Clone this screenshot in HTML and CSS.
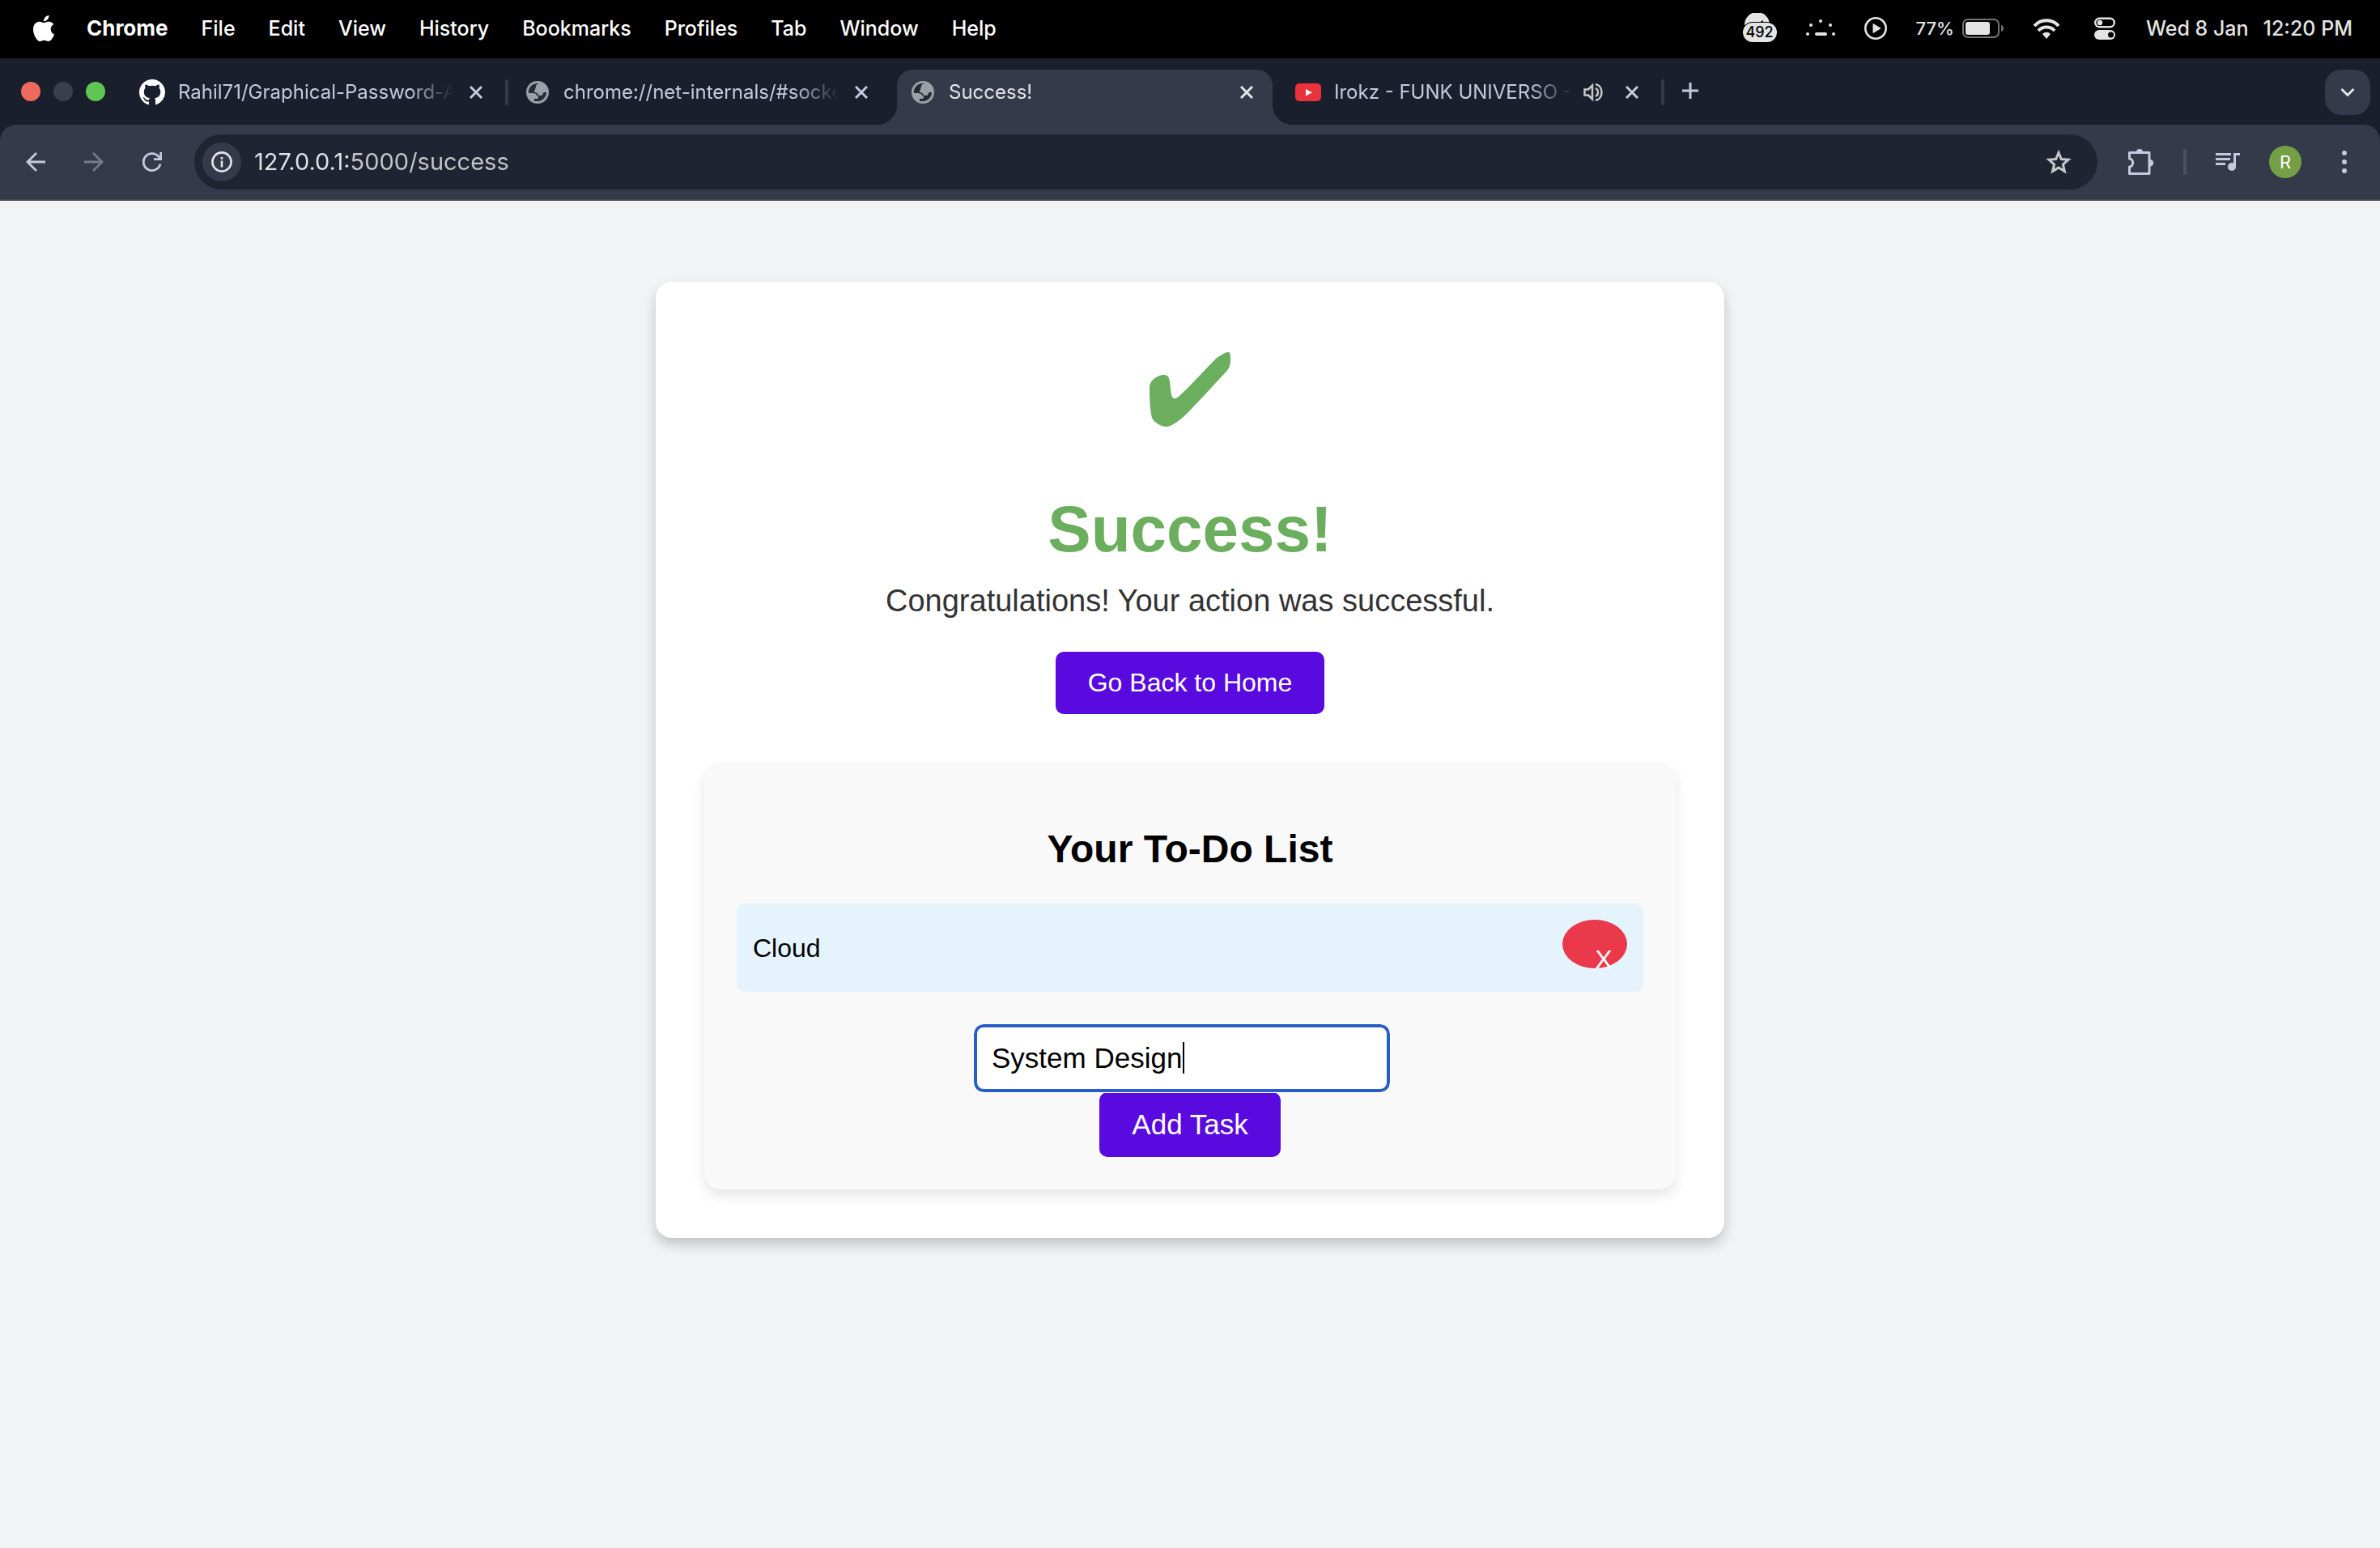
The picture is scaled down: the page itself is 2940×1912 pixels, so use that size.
FILE: index.html
```html
<!DOCTYPE html>
<html lang="en">
<head>
<meta charset="utf-8">
<title>Success!</title>
<link rel="stylesheet" href="styles.css">
</head>
<body>
<svg class="defs" aria-hidden="true">
  <symbol id="globe" viewBox="0 0 28 28">
    <circle cx="14" cy="14" r="14" fill="#9aa0a3"/>
    <path class="land" d="M3 15C2 8 8 2 16 3C13 4 12 5 12 7C12 8 11 9 11 10C11 12 10 11 10 13C10 15 14 14 14 16C14 18 17 18 19 18C21 18 20 15 22 14L25 14C25 20 20 25 14 25L10 25V22H13C15 22 15 21 15 20C15 18 12 18 12 16C11 15 6 15 3 15Z"/>
  </symbol>
  <symbol id="close" viewBox="0 0 16 16">
    <path d="M1 1L15 15M15 1L1 15" fill="none" stroke="currentColor" stroke-width="3"/>
  </symbol>
</svg>

<header class="menubar">
  <nav class="menus" aria-label="Application menu">
    <button class="menu-logo" aria-label="Apple menu"><svg width="32" height="32" viewBox="0 0 24 24" fill="#fff"><path d="M12.152 6.896c-.948 0-2.415-1.078-3.96-1.04-2.04.027-3.91 1.183-4.961 3.014-2.117 3.675-.546 9.103 1.519 12.09 1.013 1.454 2.208 3.09 3.792 3.039 1.52-.065 2.09-.987 3.935-.987 1.831 0 2.35.987 3.96.948 1.637-.026 2.676-1.48 3.676-2.948 1.156-1.688 1.636-3.325 1.662-3.415-.039-.013-3.182-1.221-3.22-4.857-.026-3.04 2.48-4.494 2.597-4.559-1.429-2.09-3.623-2.324-4.39-2.376-2-.156-3.675 1.09-4.61 1.09zM15.53 3.83c.843-1.012 1.4-2.427 1.245-3.83-1.207.052-2.662.805-3.532 1.818-.78.896-1.454 2.338-1.273 3.714 1.338.104 2.715-.688 3.559-1.701"/></svg></button>
    <button class="menu-app">Chrome</button>
    <button>File</button>
    <button>Edit</button>
    <button>View</button>
    <button>History</button>
    <button>Bookmarks</button>
    <button>Profiles</button>
    <button>Tab</button>
    <button>Window</button>
    <button>Help</button>
  </nav>
  <div class="status">
    <span class="cloud">
      <svg width="42" height="38" viewBox="0 0 42 38"><path d="M2 15A15.500 15.500 0 0 1 33 14Z" fill="#e4e4e4"/><path d="M20 12l5-3v3z" fill="#000"/><rect x="-1" y="11" width="44" height="28" rx="13" fill="#000"/><rect y="12" width="42" height="24" rx="12" fill="#e4e4e4"/></svg>
      <span class="cloud-count">492</span>
    </span>
    <svg width="36" height="22" viewBox="0 0 36 22" fill="#e4e4e4"><circle cx="2" cy="18" r="2"/><circle cx="6" cy="7" r="2"/><circle cx="18" cy="2" r="2"/><circle cx="30" cy="7" r="2"/><circle cx="34" cy="18" r="2"/><rect x="11" y="16" width="15" height="4" rx="2"/></svg>
    <svg width="28" height="28" viewBox="0 0 28 28"><circle cx="14" cy="14" r="12.700" fill="none" stroke="#e4e4e4" stroke-width="2.600"/><path d="M11 8.500v11l9-5.500z" fill="#e4e4e4" stroke="#e4e4e4" stroke-linejoin="round"/></svg>
    <span class="battery">
      <span class="percent">77%</span>
      <svg width="51" height="24" viewBox="0 0 51 24"><rect x="1" y="1" width="44" height="22" rx="6" fill="none" stroke="#737373" stroke-width="2"/><rect x="4" y="4" width="30" height="16" rx="3" fill="#e4e4e4"/><path d="M48 8c4 1 4 7 0 8z" fill="#737373"/></svg>
    </span>
    <svg width="40" height="26" viewBox="0 0 40 26"><g fill="none" stroke="#e4e4e4" stroke-width="4"><path d="M2 10C10 1 24 1 32 10"/><path d="M7 16C12 10 22 10 27 16"/></g><path d="M12 20c3-3 7-3 10 0l-5 6z" fill="#e4e4e4"/></svg>
    <svg width="28" height="28" viewBox="0 0 28 28"><rect x="1.200" y="1.700" width="23.600" height="10.600" rx="5.300" fill="none" stroke="#e4e4e4" stroke-width="2.400"/><circle cx="7" cy="7" r="3.200" fill="#e4e4e4"/><rect y="16" width="26" height="12" rx="6" fill="#e4e4e4"/><circle cx="20.500" cy="22" r="3.500" fill="#000"/></svg>
    <time class="clock"><span>Wed 8 Jan</span><span>12:20 PM</span></time>
  </div>
</header>

<div class="browser">
  <div class="tabstrip">
    <div class="lights"><button class="light red" aria-label="Close window"></button><button class="light grey" aria-label="Minimise window"></button><button class="light green" aria-label="Zoom window"></button></div>
    <div class="tab">
      <svg class="favicon" viewBox="0 0 16 16" fill="#fff"><path d="M8 0C3.580 0 0 3.580 0 8c0 3.540 2.290 6.530 5.470 7.590.4.070.55-.17.55-.38 0-.19-.01-.82-.01-1.490-2.010.37-2.530-.49-2.690-.94-.09-.23-.48-.94-.82-1.130-.28-.15-.68-.52-.01-.53.63-.01 1.080.58 1.230.82.72 1.210 1.870.87 2.330.66.070-.52.28-.87.51-1.070-1.780-.2-3.640-.89-3.640-3.950 0-.87.31-1.590.82-2.150-.08-.2-.36-1.020.08-2.120 0 0 .67-.21 2.200.82.64-.18 1.320-.27 2-.27s1.360.09 2 .27c1.530-1.040 2.200-.82 2.200-.82.44 1.100.16 1.920.08 2.120.51.56.82 1.270.82 2.150 0 3.070-1.870 3.750-3.650 3.950.29.25.54.73.54 1.480 0 1.070-.01 1.930-.01 2.200 0 .21.15.46.55.38A8.010 8.010 0 0 0 16 8c0-4.420-3.580-8-8-8z"/></svg>
      <span class="tab-title">Rahil71/Graphical-Password-A</span>
      <button class="tab-close" aria-label="Close tab"><svg><use href="#close"/></svg></button>
      <span class="tab-divider"></span>
    </div>
    <div class="tab">
      <svg class="favicon globe"><use href="#globe"/></svg>
      <span class="tab-title">chrome://net-internals/#socke</span>
      <button class="tab-close" aria-label="Close tab"><svg><use href="#close"/></svg></button>
    </div>
    <div class="tab active">
      <svg class="favicon globe"><use href="#globe"/></svg>
      <span class="tab-title">Success!</span>
      <button class="tab-close" aria-label="Close tab"><svg><use href="#close"/></svg></button>
    </div>
    <div class="tab">
      <svg class="favicon" viewBox="0 0 32 32"><rect y="5" width="32" height="22" rx="5" fill="#ea323d"/><path d="M13 12v8.500l8-4.300z" fill="#fff"/></svg>
      <span class="tab-title">Irokz - FUNK UNIVERSO -</span>
      <button class="tab-audio" aria-label="Mute tab"><svg width="24" height="24" viewBox="0 0 24 24" fill="none" stroke="#c7c7c7" stroke-width="2.500"><path d="M1.500 8.500h4.500l5-5v17l-5-5h-4.500z"/><path d="M15 7c4 2 4 8 0 10M15 2c10 2 10 18 0 20"/></svg></button>
      <button class="tab-close" aria-label="Close tab"><svg><use href="#close"/></svg></button>
      <span class="tab-divider"></span>
    </div>
    <button class="new-tab" aria-label="New tab"><svg width="20" height="20" viewBox="0 0 20 20"><path d="M10 0V20M0 10H20" stroke="#c3cae0" stroke-width="3"/></svg></button>
    <button class="tab-search" aria-label="Search tabs"><svg width="18" height="12" viewBox="0 0 18 12"><path d="M1.500 2L9 9.500L16.500 2" fill="none" stroke="#e3e3e8" stroke-width="3"/></svg></button>
  </div>

  <div class="toolbar">
    <div class="nav">
      <button aria-label="Back"><svg width="24" height="24" viewBox="0 0 24 24"><path d="M24 12H2M13 1L2 12L13 23" fill="none" stroke="#c3cae0" stroke-width="2.800"/></svg></button>
      <button aria-label="Forward"><svg width="24" height="24" viewBox="0 0 24 24"><path d="M0 12H22M11 1L22 12L11 23" fill="none" stroke="#777b87" stroke-width="2.800"/></svg></button>
      <button aria-label="Reload"><svg width="24" height="24" viewBox="0 0 24 24"><path d="M22 14.500A10.500 10.500 0 1 1 20 5.500L22 8" fill="none" stroke="#c3cae0" stroke-width="2.800"/><path d="M24 0V10H14V7.300H21.300V0Z" fill="#c3cae0"/></svg></button>
    </div>
    <div class="omnibox">
      <button class="site-info" aria-label="Site information"><svg width="26" height="26" viewBox="0 0 26 26"><circle cx="13" cy="13" r="11.600" fill="none" stroke="#e3e3e8" stroke-width="2.600"/><path d="M13 11.500v8M13 7v2.700" stroke="#e3e3e8" stroke-width="2.600"/></svg></button>
      <input class="url" type="text" aria-label="Address" value="127.0.0.1:5000/success" spellcheck="false">
      <button aria-label="Bookmark this tab"><svg width="32" height="30" viewBox="0 0 32 30"><path d="M16 3.500L19.300 11.600L28 12.300L21.400 18L23.400 26.600L16 22L8.600 26.600L10.600 18L4 12.300L12.700 11.600Z" fill="none" stroke="#c7c7cb" stroke-width="3"/></svg></button>
    </div>
    <div class="tools">
      <button aria-label="Extensions"><svg width="34" height="34" viewBox="0 0 34 34"><path d="M3.500 5.500H28V31.500H3.500V23C9 23 9 13 3.500 13Z" fill="none" stroke="#c3cae0" stroke-width="3" stroke-linejoin="round"/><path d="M12 5a4 4 0 0 1 8 0zM29 14a4.200 4.200 0 0 1 0 8.500z" fill="#c3cae0"/></svg></button>
      <span class="tool-divider"></span>
      <button aria-label="Media controls"><svg width="30" height="24" viewBox="0 0 30 24" fill="#c3cae0"><path d="M0 1h19v3H0zM0 7h18v3H0zM0 13h12v3H0z"/><circle cx="20" cy="18" r="5"/><path d="M22 1h8v3h-5v14h-3z"/></svg></button>
      <button class="avatar" aria-label="Profile">R</button>
      <button aria-label="More"><svg width="6" height="28" viewBox="0 0 6 28" fill="#c3cae0"><circle cx="3" cy="3" r="3"/><circle cx="3" cy="14" r="3"/><circle cx="3" cy="25" r="3"/></svg></button>
    </div>
  </div>
</div>

<main class="page">
  <section class="card">
    <svg class="check" viewBox="0 0 100 92" role="img" aria-label="Success"><path d="M0 44C0 34 11 28 18 28C28 28 24 44 28 55Q30 60 37 54C52 40 66 24 82 8Q94 -1 98 0Q100 1 100 8C100 18 98 21 91 28C76 44 60 62 44 78Q28 92 21 92C14 92 6 87 3 81C1 74 0 58 0 44Z"/></svg>
    <h1>Success!</h1>
    <p>Congratulations! Your action was successful.</p>
    <a class="button" href="#">Go Back to Home</a>

    <section class="todo">
      <h2>Your To-Do List</h2>
      <ul class="tasks">
        <li><span>Cloud</span><button class="remove" aria-label="Remove Cloud">X</button></li>
      </ul>
      <form class="add">
        <div class="field">
          <input type="text" aria-label="New task" value="System Design" spellcheck="false">
          <span class="caret"></span>
        </div>
        <button type="button" class="button large">Add Task</button>
      </form>
    </section>
  </section>
</main>
</body>
</html>
```
FILE: styles.css
```css
* {
  box-sizing: border-box;
}

body {
  margin: 0;
  min-height: 100vh;
  background: #f2f3f5;
  font-family: "Liberation Sans", Arial, sans-serif;
}

button {
  padding: 0;
  border: 0;
  background: none;
  color: inherit;
  font: inherit;
}

svg {
  display: block;
}

.defs {
  position: absolute;
  width: 0;
  height: 0;
}

/* System menu bar */
.menubar {
  display: flex;
  justify-content: space-between;
  align-items: center;
  height: 72px;
  padding: 0 34px 2px 38px;
  background: #000;
  color: #fff;
  font: 500 25px/32px Inter, sans-serif;
}

.menus {
  display: flex;
  align-items: center;
  gap: 41px;
}

.menu-logo {
  margin-right: -4px;
}

.menu-app {
  font-size: 26px;
  font-weight: 700;
}

.status {
  display: flex;
  align-items: center;
  gap: 36px;
  color: #e4e4e4;
}

.cloud {
  position: relative;
}

.cloud-count {
  position: absolute;
  left: 0;
  right: 0;
  bottom: 2px;
  color: #000;
  font-size: 18px;
  line-height: 24px;
  text-align: center;
}

.battery {
  display: flex;
  align-items: center;
  gap: 10px;
}

.percent {
  font-size: 22px;
}

.clock {
  display: flex;
  gap: 18px;
}

/* Browser window */
.browser {
  background: #191f2c;
  border-bottom: 2px solid #46494f;
  font-family: Inter, sans-serif;
}

.tabstrip {
  display: flex;
  height: 82px;
  padding: 14px 12px 0 26px;
}

.lights {
  display: flex;
  align-items: center;
  gap: 16px;
  margin-right: 26px;
  padding-bottom: 14px;
}

.light {
  width: 24px;
  height: 24px;
  border-radius: 50%;
}

.red {
  background: #ec6a5e;
}

.grey {
  background: #3a3f4b;
}

.green {
  background: #61c554;
}

.tab {
  position: relative;
  display: flex;
  align-items: center;
  width: 476px;
  padding: 0 36px 12px 16px;
  color: #c3cae0;
  font-size: 24px;
  line-height: 32px;
}

.favicon {
  flex: none;
  width: 32px;
  height: 32px;
}

.globe {
  padding: 2px;
}

.land {
  fill: #242a38;
}

.tab-title {
  flex: 1;
  margin: 0 20px 0 16px;
  overflow: hidden;
  white-space: nowrap;
  mask-image: linear-gradient(to left, transparent, #000 56px);
}

.tab-close svg {
  width: 16px;
  height: 16px;
}

.tab-audio {
  margin: 0 28px 0 -8px;
}

.tab-divider {
  position: absolute;
  right: 4px;
  top: 12px;
  width: 4px;
  height: 32px;
  border-radius: 2px;
  background: #353a4a;
}

.active {
  width: 464px;
  margin-right: 12px;
  padding-right: 24px;
  border-radius: 20px 20px 0 0;
  background: #353a4a;
  color: #e3e3e8;
}

.active::before,
.active::after {
  content: "";
  position: absolute;
  bottom: 0;
  width: 24px;
  height: 24px;
}

.active::before {
  right: 100%;
  background: radial-gradient(circle at 0 0, transparent 24px, #353a4a 24px);
}

.active::after {
  left: 100%;
  background: radial-gradient(circle at 100% 0, transparent 24px, #353a4a 24px);
}

.new-tab {
  margin-left: 18px;
  padding-bottom: 16px;
}

.tab-search {
  display: grid;
  place-items: center;
  width: 56px;
  height: 56px;
  margin-left: auto;
  border-radius: 20px;
  background: #353a4a;
}

.toolbar {
  display: flex;
  align-items: center;
  height: 92px;
  padding: 0 41px 0 32px;
  border-radius: 20px 20px 0 0;
  background: #353a4a;
}

.nav {
  display: flex;
  gap: 48px;
  margin-right: 40px;
}

.omnibox {
  flex: 1;
  display: flex;
  align-items: center;
  height: 68px;
  padding: 0 32px 0 10px;
  border-radius: 34px;
  background: #1f2433;
}

.site-info {
  display: grid;
  place-items: center;
  width: 48px;
  height: 48px;
  border-radius: 50%;
  background: #353a4a;
}

/* The host is brighter than the port and path */
.url {
  flex: 1;
  margin-left: 16px;
  padding: 0;
  border: 0;
  outline: 0;
  background: linear-gradient(to right, #e3e3e8 119px, #c7c7c9 119px);
  background-clip: text;
  color: transparent;
  font: 29px/40px Inter, sans-serif;
}

.tools {
  display: flex;
  align-items: center;
  gap: 36px;
  margin-left: 36px;
}

.tool-divider {
  width: 4px;
  height: 32px;
  border-radius: 2px;
  background: #4a5061;
}

.avatar {
  width: 40px;
  height: 40px;
  margin-right: 14px;
  border-radius: 50%;
  background: #759f45;
  color: #fff;
  font-size: 22px;
}

/* Page */
.page {
  padding: 100px 40px;
}

.card {
  display: flex;
  flex-direction: column;
  align-items: center;
  max-width: 1320px;
  margin: 0 auto;
  padding: 87px 60px 60px;
  border-radius: 20px;
  background: #fff;
  box-shadow: 0 8px 16px rgba(0, 0, 0, 0.2);
}

.check {
  width: 100px;
  height: 92px;
  fill: #6aae5e;
}

h1 {
  margin: 81px 0 20px;
  color: #6aae5e;
  font-size: 80px;
  line-height: 92px;
}

p {
  margin: 0 0 41px;
  color: #333;
  font-size: 38px;
  line-height: 44px;
}

.button {
  padding: 20px 40px;
  border-radius: 10px;
  background: #590bdf;
  color: #fff;
  font-size: 32px;
  line-height: 37px;
  text-decoration: none;
}

.large {
  font-size: 35px;
  line-height: 40px;
}

.todo {
  align-self: stretch;
  margin-top: 60px;
  padding: 40px;
  border-radius: 20px;
  background: #f9f9f9;
  box-shadow: 0 8px 16px rgba(0, 0, 0, 0.1);
  text-align: center;
}

h2 {
  margin: 40px 0;
  font-size: 48px;
  line-height: 54px;
}

.tasks {
  margin: 0 0 40px;
  padding: 0;
  list-style: none;
}

.tasks li {
  display: flex;
  justify-content: space-between;
  align-items: center;
  padding: 20px;
  border-radius: 10px;
  background: #e5f3fd;
  font-size: 32px;
  line-height: 34px;
}

.remove {
  width: 80px;
  height: 60px;
  margin-bottom: 9px;
  padding: 38px 0 0 22px;
  border-radius: 50%;
  background: #ea394b;
  color: #fff;
  line-height: 22px;
}

.add {
  display: flex;
  flex-direction: column;
  align-items: center;
}

.field {
  position: relative;
  width: 514px;
  margin-right: 20px;
}

.field input {
  display: block;
  width: 100%;
  height: 84px;
  padding: 0 18px;
  border: 4px solid #275fc9;
  border-radius: 12px;
  outline: 1px solid #fff;
  background: #fff;
  color: #000;
  font: 35px/42px "Liberation Sans", Arial, sans-serif;
}

.caret {
  position: absolute;
  top: 22px;
  left: 258px;
  width: 2px;
  height: 39px;
  background: #000;
}
```
